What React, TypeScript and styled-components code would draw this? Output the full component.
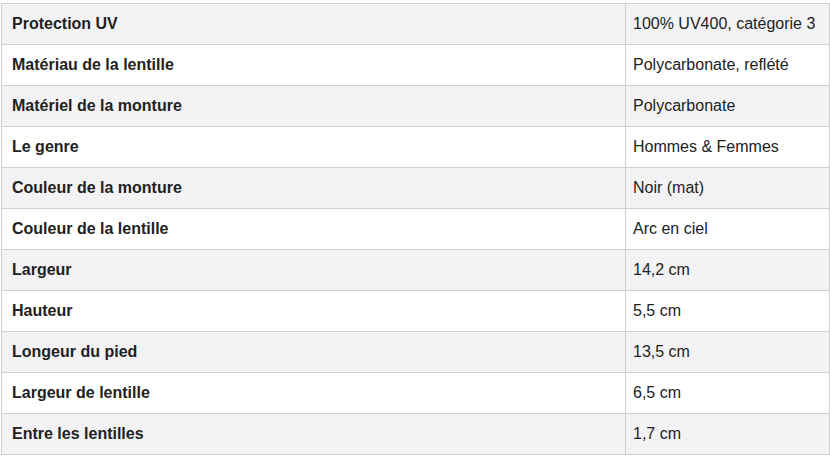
import React from "react";
import styled, { createGlobalStyle } from "styled-components";

const GlobalStyle = createGlobalStyle`
  body {
    margin: 0;
    background: #ffffff;
    font-family: "Liberation Sans", Arial, Helvetica, sans-serif;
  }
`;

const Page = styled.div`
  padding: 3px 0 0 1px;
`;

const SpecTable = styled.table`
  width: 829px;
  border-collapse: collapse;
  table-layout: fixed;
  border: 1px solid #cfcfd1;
  color: #222222;
  font-size: 16px;
  line-height: 20px;
`;

const Row = styled.tr<{ $striped: boolean }>`
  background: ${(p) => (p.$striped ? "#f3f3f5" : "#ffffff")};
  border-bottom: 1px solid #cfcfd1;
`;

const LabelCell = styled.th`
  width: 603px;
  padding: 10px;
  text-align: left;
  font-weight: 700;
  border-right: 1px solid #cfcfd1;
`;

const ValueCell = styled.td`
  padding: 10px 7px;
  text-align: left;
  font-weight: 400;
  white-space: nowrap;
`;

const specs: [string, string][] = [
  ["Protection UV", "100% UV400, catégorie 3"],
  ["Matériau de la lentille", "Polycarbonate, reflété"],
  ["Matériel de la monture", "Polycarbonate"],
  ["Le genre", "Hommes & Femmes"],
  ["Couleur de la monture", "Noir (mat)"],
  ["Couleur de la lentille", "Arc en ciel"],
  ["Largeur", "14,2 cm"],
  ["Hauteur", "5,5 cm"],
  ["Longeur du pied", "13,5 cm"],
  ["Largeur de lentille", "6,5 cm"],
  ["Entre les lentilles", "1,7 cm"],
];

export default function App() {
  return (
    <Page>
      <GlobalStyle />
      <SpecTable>
        <tbody>
          {specs.map(([label, value], index) => (
            <Row key={label} $striped={index % 2 === 0}>
              <LabelCell>{label}</LabelCell>
              <ValueCell>{value}</ValueCell>
            </Row>
          ))}
        </tbody>
      </SpecTable>
    </Page>
  );
}
